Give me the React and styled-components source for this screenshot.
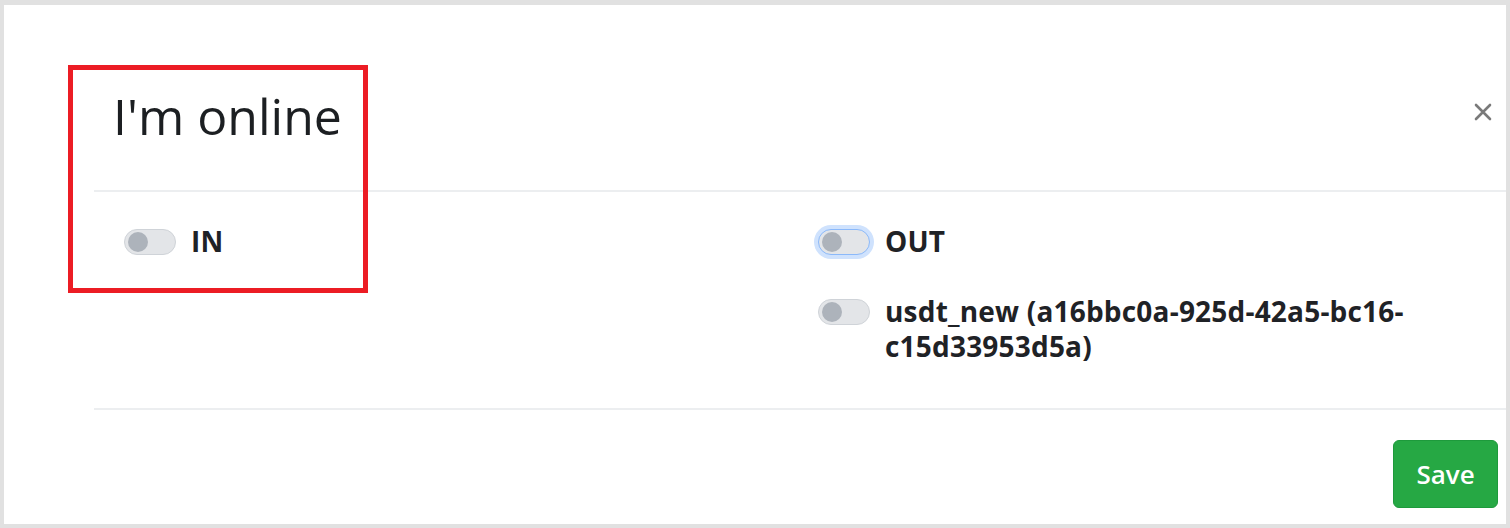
import React from 'react';
import styled, { createGlobalStyle } from 'styled-components';

const GlobalStyle = createGlobalStyle`
  html, body {
    margin: 0;
    padding: 0;
    background: #e1e1e1;
  }
  body {
    font-family: "Open Sans", "Noto Sans", "Liberation Sans", sans-serif;
    color: #212529;
  }
`;

const Frame = styled.div`
  box-sizing: border-box;
  width: 1510px;
  height: 528px;
  padding: 5px 4px 4px 4px;
  background: #e1e1e1;
`;

const Panel = styled.div`
  position: relative;
  box-sizing: border-box;
  height: 100%;
  background: #fff;
  padding-left: 90px;
  padding-top: 62px;
  overflow: hidden;
`;

const Header = styled.div`
  display: flex;
  align-items: flex-start;
  justify-content: space-between;
  padding: 24px 14px 49px 19px;
  border-bottom: 2px solid #eceef0;
`;

const Title = styled.h2`
  margin: 0;
  font-size: 50px;
  line-height: 1;
  font-weight: 400;
  color: #1c1f22;
`;

const Close = styled.button`
  border: 0;
  background: none;
  padding: 0;
  margin: 12px 0 0;
  width: 18px;
  height: 18px;
  cursor: pointer;
  opacity: 0.6;
`;

const Body = styled.div`
  display: grid;
  grid-template-columns: 1fr 1fr;
  padding: 32px 30px 44px;
  border-bottom: 2px solid #eceef0;
`;

const Column = styled.div`
  display: flex;
  flex-direction: column;
  gap: 35px;
  padding-left: ${({ $offset }) => $offset || 0}px;
`;

const SwitchRow = styled.label`
  display: flex;
  align-items: flex-start;
  gap: 15px;
  font-size: 28px;
  font-weight: 700;
  line-height: 35px;
  letter-spacing: 0.2px;
  color: #1f2226;
`;

const Track = styled.span`
  position: relative;
  flex: none;
  box-sizing: border-box;
  width: 52px;
  height: 26px;
  margin-top: 5px;
  border-radius: 13px;
  background: #e3e5e8;
  border: 1px solid ${({ $focused }) => ($focused ? '#8bb9fa' : '#cfd3d8')};
  box-shadow: ${({ $focused }) => ($focused ? '0 0 0 4px #cfe2fd' : 'none')};

  &::after {
    content: '';
    position: absolute;
    left: 3px;
    top: 2px;
    width: 20px;
    height: 20px;
    border-radius: 50%;
    background: #adb3bb;
  }
`;

const Footer = styled.div`
  display: flex;
  justify-content: flex-end;
  padding: 30px 8px 0;
`;

const SaveButton = styled.button`
  width: 105px;
  height: 68px;
  border: 1px solid #1e9a3c;
  border-radius: 6px;
  background: #26a844;
  color: #fff;
  font-family: inherit;
  font-size: 26px;
  font-weight: 600;
  cursor: pointer;
`;

const Annotation = styled.div`
  position: absolute;
  left: 64px;
  top: 60px;
  width: 300px;
  height: 228px;
  box-sizing: border-box;
  border: 5px solid #ec1c24;
  pointer-events: none;
`;

const Switch = ({ label, focused }) => (
  <SwitchRow>
    <Track $focused={focused} />
    <span>{label}</span>
  </SwitchRow>
);

const App = () => (
  <>
    <GlobalStyle />
    <Frame>
      <Panel>
        <Header>
          <Title>I&apos;m online</Title>
          <Close aria-label="Close">
            <svg width="18" height="18" viewBox="0 0 18 18">
              <path d="M2 2 L16 16 M16 2 L2 16" stroke="#222" strokeWidth="2.6" strokeLinecap="round" />
            </svg>
          </Close>
        </Header>
        <Body>
          <Column>
            <Switch label="IN" />
          </Column>
          <Column $offset={18}>
            <Switch label="OUT" focused />
            <Switch label="usdt_new (a16bbc0a-925d-42a5-bc16-c15d33953d5a)" />
          </Column>
        </Body>
        <Footer>
          <SaveButton>Save</SaveButton>
        </Footer>
        <Annotation />
      </Panel>
    </Frame>
  </>
);

export default App;
